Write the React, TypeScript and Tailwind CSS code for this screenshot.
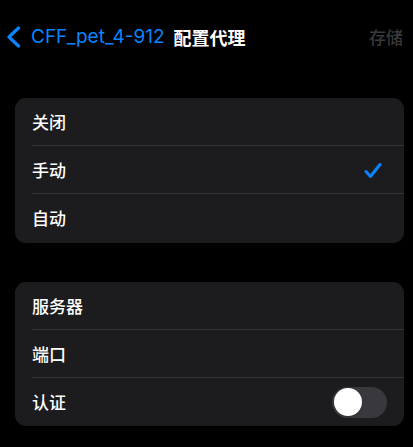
import React from "react";

const cjk = { fontFamily: '"Noto Sans CJK SC", "Noto Sans", sans-serif' };
const latin = { fontFamily: 'Inter, "Noto Sans CJK SC", sans-serif' };

function Row({ label, right, last, pr = "pr-[18px]" }: { label: string; right?: React.ReactNode; last?: boolean; pr?: string }) {
  return (
    <div className={`relative flex h-[48px] items-center pl-[17px] ${pr}`}>
      <span className="text-[17px] font-medium text-white" style={cjk}>{label}</span>
      <div className="ml-auto flex items-center">{right}</div>
      {!last && <div className="absolute bottom-0 left-[17px] right-0 h-px bg-[#333336]" />}
    </div>
  );
}

export default function App() {
  return (
    <div className="h-[447px] w-[413px] overflow-hidden bg-black">
      <div className="flex h-[74px] items-center pl-[6px] pr-[10px]">
        <svg width="16" height="22" viewBox="0 0 16 22" className="mr-[9px]">
          <path d="M12.5 2 L3 11 L12.5 20" fill="none" stroke="#0a84ff" strokeWidth="3.2" strokeLinecap="round" strokeLinejoin="round" />
        </svg>
        <span className="text-[19px] text-[#0a84ff]" style={latin}>CFF_pet_4-912</span>
        <span className="ml-[9px] text-[18px] font-semibold text-white" style={cjk}>配置代理</span>
        <span className="ml-auto text-[17px] font-medium text-[#3a3a3c]" style={cjk}>存储</span>
      </div>
      <div className="ml-[15px] mr-[9px] mt-[24px] overflow-hidden rounded-[11px] bg-[#1c1c1e]">
        <Row label="关闭" />
        <Row
          label="手动"
          pr="pr-[22px]"
          right={
            <svg width="18" height="17" viewBox="0 0 18 17">
              <path d="M2 9.5 L6.5 14.5 L16 2.5" fill="none" stroke="#0a84ff" strokeWidth="3" strokeLinecap="round" strokeLinejoin="round" />
            </svg>
          }
        />
        <Row label="自动" last />
        <div className="h-px" />
      </div>
      <div className="ml-[15px] mr-[9px] mt-[39px] overflow-hidden rounded-[11px] bg-[#1c1c1e]">
        <Row label="服务器" />
        <Row label="端口" />
        <Row
          label="认证"
          last
          pr="pr-[17px]"
          right={
            <div className="flex h-[31px] w-[55px] items-center rounded-full bg-[#39393d] px-[2px]">
              <div className="h-[28px] w-[28px] rounded-full bg-white shadow" />
            </div>
          }
        />
      </div>
    </div>
  );
}
